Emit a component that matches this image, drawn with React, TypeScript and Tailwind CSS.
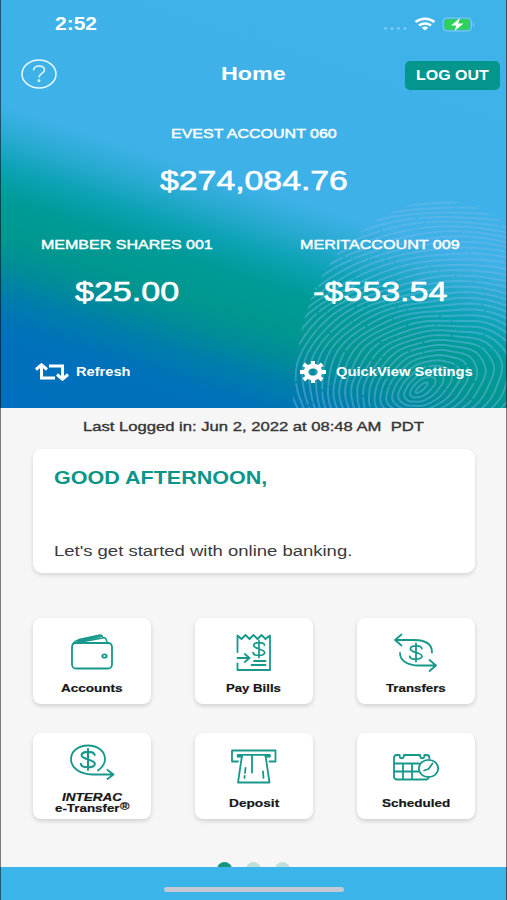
import { useLayoutEffect, useRef, useState } from "react";
import type { ReactNode } from "react";
import clsx from "clsx";

interface WideTextProps {
  children: ReactNode;
  className?: string;
}

// Stretches a single line of text to fill the width given in className
const WideText = ({ children, className }: WideTextProps) => {
  const boxRef = useRef<HTMLDivElement>(null);
  const textRef = useRef<HTMLSpanElement>(null);
  const [scale, setScale] = useState(1);

  useLayoutEffect(() => {
    if (!boxRef.current || !textRef.current) return;
    setScale(boxRef.current.clientWidth / textRef.current.offsetWidth);
  }, [children]);

  return (
    <div ref={boxRef} className={clsx("shrink-0 whitespace-pre text-left", className)}>
      <span
        ref={textRef}
        className="inline-block origin-left"
        style={{ transform: `scaleX(${scale})` }}
      >
        {children}
      </span>
    </div>
  );
};

const ridgePath = (r: number) => {
  const tilt = -0.75 * Math.exp(-r / 55);
  const calm = Math.min(1, r / 70);
  const points: string[] = [];
  for (let a = -250; a <= 110; a += 4) {
    const t = (a * Math.PI) / 180;
    const wobble = calm * (Math.sin(t * 4 + r * 0.05) * 1.8 + Math.sin(t * 9 + r * 0.13) * 0.7);
    const x = Math.cos(t) * (r * 1.2 + 4 + wobble);
    const y = Math.sin(t) * (r * 0.82 + wobble);
    const px = 421 + x * Math.cos(tilt) - y * Math.sin(tilt) + r * 0.2;
    const py = 388 + x * Math.sin(tilt) + y * Math.cos(tilt) - r * 0.1;
    points.push(`${px.toFixed(1)} ${py.toFixed(1)}`);
  }
  return `M${points.join("L")}`;
};

const ridges = Array.from({ length: 36 }, (_, i) => 3 + i * 5.9);
const breaks = ["74 2 43 1", "120 2", "57 1 92 2"];

const Fingerprint = () => (
  <svg className="absolute inset-0" width="507" height="408" viewBox="0 0 507 408" fill="none">
    <defs>
      <clipPath id="finger">
        <path d="M293 408C294 350 304 302 327 268C348 235 390 205 430 201C460 198 485 208 507 226V408Z" />
      </clipPath>
    </defs>
    <g clipPath="url(#finger)" stroke="#74b9e8" strokeOpacity="0.45" strokeWidth="2">
      {ridges.map((r, i) => (
        <path key={r} d={ridgePath(r)} strokeDasharray={breaks[i % 3]} />
      ))}
    </g>
  </svg>
);

const StatusIcons = () => (
  <svg width="94" height="18" viewBox="382 15 94 18" fill="none">
    <g fill="#8bd0f3">
      <circle cx="385.5" cy="28.5" r="1.3" />
      <circle cx="392" cy="28.5" r="1.3" />
      <circle cx="398.5" cy="28.5" r="1.3" />
      <circle cx="405" cy="28.5" r="1.3" />
    </g>
    <g stroke="#fff" strokeWidth="2.5">
      <path d="M415.500 22C421 17.600 429 17.600 434.500 22" />
      <path d="M419 25.500C422.500 22.700 427.500 22.700 431 25.500" />
    </g>
    <path d="M421.800 27.800C423.800 26.200 426.200 26.200 428.200 27.800L425 30.600Z" fill="#fff" />
    <rect x="443" y="18" width="28.5" height="13" rx="4" stroke="#88cdf0" />
    <rect x="444.500" y="19.300" width="25.500" height="10.400" rx="2.500" fill="#30d158" />
    <path d="M473 22Q475.500 24.500 473 27Z" fill="#88cdf0" />
    <path d="M460 18L451 25.500H456.300L454.500 31L463.500 23.500H458.200Z" fill="#fff" />
  </svg>
);

const RefreshIcon = () => (
  <svg width="34" height="18" viewBox="0 0 34 18" fill="none" stroke="#fff" strokeWidth="3">
    <path d="M6.500 2.500V15H20M14 3H27.500V14" />
    <path d="M1 6.500L6.500 1.800L12 6.500M22 11.500L27.500 16.200L33 11.500" />
  </svg>
);

const GearIcon = () => (
  <svg width="26" height="22" viewBox="0 0 26 22" fill="none" stroke="#fff">
    <ellipse cx="13" cy="11" rx="7" ry="5.900" strokeWidth="4.600" />
    <path
      d="M13 0V4M13 18V22M0 11H4M22 11H26M3.700 3.100L7.500 6.300M18.500 15.700L22.300 18.900M22.300 3.100L18.500 6.300M7.500 15.700L3.700 18.900"
      strokeWidth="4"
    />
  </svg>
);

const Dollar = ({ x, y, size = 1 }: { x: number; y: number; size?: number }) => (
  <g transform={`translate(${x} ${y}) scale(${size})`}>
    <path d="M5.800-4C5.200-7.600-5.600-7.600-5.600-3.600C-5.600 0 6 0 6 3.800C6 7.800-5.800 7.800-6.200 3.800M0-9V9" />
  </g>
);

const iconProps = {
  width: 48,
  height: 44,
  viewBox: "0 0 48 44",
  fill: "none",
  stroke: "#17988b",
  strokeWidth: 1.8,
  strokeLinecap: "round" as const,
  strokeLinejoin: "round" as const,
};

const WalletIcon = () => (
  <svg {...iconProps}>
    <rect x="4" y="13" width="40" height="25.5" rx="4" />
    <path
      d="M4.500 14.500C5.500 11.500 8 10.500 11 9.600L32 5C34 4.700 34.500 6 35 7.500M10 12.500L36 7.800C38 7.600 38.500 9.500 39 12.500M9 11.200L33 6.500"
      strokeWidth="1.500"
    />
    <ellipse cx="36.500" cy="26" rx="2.200" ry="1.700" />
  </svg>
);

const BillIcon = () => (
  <svg {...iconProps}>
    <path d="M7.500 22V5.500L11.500 9L15.500 5L19.500 9L23.500 5L27.500 9L31.500 5L35.500 9L40 5.500V40H7.500V33.500" />
    <path d="M7.500 28H19.500M14.800 24L19.500 28L14.800 32M24 31H35.500M21.500 35H35.500" />
    <Dollar x={29} y={19} size={0.95} />
  </svg>
);

const TransferIcon = () => (
  <svg {...iconProps}>
    <path d="M9.500 4.500L3 10L9.500 15.500M3.500 10H22C33 10 40 14 40 22.500M37.500 30L44 35.500L37.500 41M43.500 35.500H27C16 35.500 8 31 8 23" />
    <Dollar x={24} y={22.500} />
  </svg>
);

const InteracIcon = () => (
  <svg {...iconProps}>
    <path d="M30 29.500C34 26.500 37 23 37 18C37 10 29.500 4.500 20 4.500C10.500 4.500 3 10 3 18C3 27 12 33 24 33.500H45M39.500 29L45.500 33.500L39.500 38" />
    <Dollar x={20} y={18.500} size={1.15} />
  </svg>
);

const DepositIcon = () => (
  <svg {...iconProps}>
    <path d="M8 20.500H2V9.500H45.500V20.500H39.500" />
    <path d="M8 15.500V13.800H39.500V15.500M12 14.500L8 41.500H39.500L35.500 14.500" />
    <path d="M22 14.500V31.500M15.500 27L15 32M14.700 35L14.500 37M33 30.500L33.500 37" />
    <path d="M8 15H11.500M36 15H39.500" strokeWidth="2.800" />
  </svg>
);

const ScheduleIcon = () => (
  <svg {...iconProps}>
    <path d="M37 36C36.500 37.500 35.500 38.500 34 38.500H5C3 38.500 2 37 2 35.500V17C2 15 3 14 5 14H7.500C7.500 18.500 12 18.500 12 14H28C28 18.500 32.500 18.500 32.500 14H34.500C36.500 14 37.500 15 37.500 17.500" />
    <path d="M2 22.500H27M2 30.500H26.500M11 22.500V38M20 22.500V38" />
    <ellipse cx="36.500" cy="27.500" rx="9.700" ry="8.600" />
    <path d="M40.500 22.500L36.500 28L32 29.500" />
  </svg>
);

interface TileProps {
  icon: ReactNode;
  children: ReactNode;
}

const Tile = ({ icon, children }: TileProps) => (
  <button className="flex h-[86px] flex-col items-center rounded-lg bg-white text-[11.5px] font-bold leading-[14px] text-[#161616] shadow-[0_2px_4px_rgba(0,0,0,0.16)] [-webkit-text-stroke:0.2px_#161616]">
    {icon}
    {children}
  </button>
);

const App = () => {
  return (
    <div className="relative flex h-[900px] w-[507px] flex-col overflow-hidden bg-[#f6f6f6]">
      <section className="relative h-[408px] shrink-0 bg-[linear-gradient(198deg,#3eb3e9_0%,#3eb1e8_47%,#2aabd3_52%,#0ba2b3_58%,#009b98_63%,#00978f_70%,#008c99_75%,#007dab_80%,#0071bb_86%,#006fbe_100%)] font-['Liberation_Sans',sans-serif] text-white">
        <Fingerprint />
        <div className="relative">
          <div className="flex h-12 items-center justify-between pl-[55px] pr-[31px]">
            <WideText className="w-[42px] pt-px text-[18px] font-bold">2:52</WideText>
            <StatusIcons />
          </div>
          <header className="flex h-[52px] items-center justify-between pl-[21px] pr-[7px]">
            <div className="flex w-[80px]">
              <button aria-label="Help">
                <svg width="36" height="30" viewBox="0 0 36 30" fill="none" stroke="#eafaff" strokeWidth="1.500">
                  <ellipse cx="18" cy="15" rx="17" ry="14" />
                  <path d="M12.500 11.500C12.500 5.500 23.500 5.500 23.500 11C23.500 14.500 18 14.500 18 18.500" />
                  <circle cx="18" cy="21.800" r="0.700" fill="#eafaff" />
                </svg>
              </button>
            </div>
            <WideText className="w-[65px] pt-px text-[19px] font-bold">Home</WideText>
            <button className="mt-[2px] flex h-[29px] w-[95px] items-center justify-center rounded-[5px] bg-[#04968c]">
              <WideText className="w-[73px] text-[14px] font-bold">LOG OUT</WideText>
            </button>
          </header>

          <div className="mt-6 flex flex-col items-center">
            <WideText className="w-[166px] text-[13.5px] leading-5 [-webkit-text-stroke:0.45px_white]">EVEST ACCOUNT 060</WideText>
            <WideText className="mt-[19px] w-[188px] text-[27.5px] leading-9 [-webkit-text-stroke:0.6px_white]">$274,084.76</WideText>
          </div>
          <div className="mt-9 grid grid-cols-2">
            <div className="flex flex-col items-center">
              <WideText className="w-[172px] text-[13.5px] leading-5 [-webkit-text-stroke:0.45px_white]">MEMBER SHARES 001</WideText>
              <WideText className="mt-[19px] w-[104px] text-[27.5px] leading-9 [-webkit-text-stroke:0.6px_white]">$25.00</WideText>
            </div>
            <div className="flex flex-col items-center">
              <WideText className="w-[160px] text-[13.5px] leading-5 [-webkit-text-stroke:0.45px_white]">MERITACCOUNT 009</WideText>
              <WideText className="mt-[19px] w-[135px] text-[27.5px] leading-9 [-webkit-text-stroke:0.6px_white]">-$553.54</WideText>
            </div>
          </div>
          <div className="mt-[52px] flex h-5 items-center pl-[35px]">
            <button className="flex w-[265px] items-center gap-[7px]">
              <RefreshIcon />
              <WideText className="w-[55px] text-[12.5px] font-bold leading-5">Refresh</WideText>
            </button>
            <button className="flex items-center gap-[10px]">
              <GearIcon />
              <WideText className="w-[137px] text-[12.5px] font-bold leading-5">QuickView Settings</WideText>
            </button>
          </div>
        </div>
      </section>

      <main className="flex grow flex-col items-center pt-[9px] font-['Liberation_Sans',sans-serif]">
        <WideText className="w-[341px] text-[13.5px] leading-5 text-[#333] [-webkit-text-stroke:0.35px_#333]">
          {"Last Logged in: Jun 2, 2022 at 08:48 AM  PDT"}
        </WideText>
        <div className="mt-3 flex h-[124px] w-[442px] flex-col rounded-[9px] bg-white pl-[21px] pt-[17px] shadow-[0_2px_4px_rgba(0,0,0,0.14)]">
          <WideText className="w-[213px] text-[18.5px] font-bold leading-6 text-[#0b9488]">GOOD AFTERNOON,</WideText>
          <WideText className="mt-[49px] w-[298px] text-[15.5px] leading-6 text-[#3a3a3a]">Let's get started with online banking.</WideText>
        </div>

        <div className="mt-[45px] grid w-[442px] grid-cols-[118px_118px_118px] justify-between gap-y-[29px]">
          <Tile icon={<div className="pt-3"><WalletIcon /></div>}>
            <WideText className="mt-[7px] w-[61px]">Accounts</WideText>
          </Tile>
          <Tile icon={<div className="pt-3"><BillIcon /></div>}>
            <WideText className="mt-[7px] w-[55px]">Pay Bills</WideText>
          </Tile>
          <Tile icon={<div className="pt-3"><TransferIcon /></div>}>
            <WideText className="mt-[7px] w-[60px]">Transfers</WideText>
          </Tile>
          <Tile icon={<div className="-mb-1 pt-2"><InteracIcon /></div>}>
            <WideText className="mt-[11px] w-[60px] text-[11.5px] italic leading-[11px]">INTERAC</WideText>
            <div className="flex leading-[11px]">
              <WideText className="w-[65px]">e-Transfer</WideText>
              <WideText className="-mt-[2px] w-[9px] text-[10px]">®</WideText>
            </div>
          </Tile>
          <Tile icon={<div className="pt-2"><DepositIcon /></div>}>
            <WideText className="mt-[11px] w-[50px]">Deposit</WideText>
          </Tile>
          <Tile icon={<div className="pt-2"><ScheduleIcon /></div>}>
            <WideText className="mt-[11px] w-[68px]">Scheduled</WideText>
          </Tile>
        </div>

        <div className="mt-[43px] flex h-[5px] gap-[14px] overflow-hidden">
          <span className="size-[15px] rounded-full bg-[#12967f]" />
          <span className="size-[15px] rounded-full bg-[#bfdfda]" />
          <span className="size-[15px] rounded-full bg-[#bfdfda]" />
        </div>
      </main>

      <footer className="flex h-[33px] shrink-0 justify-center bg-[#3ab4e9] pt-5">
        <div className="h-[5px] w-[180px] rounded-full bg-[#c3c8d1]" />
      </footer>
      <div className="pointer-events-none absolute inset-0 border-x border-black/50" />
    </div>
  );
};

export default App;
